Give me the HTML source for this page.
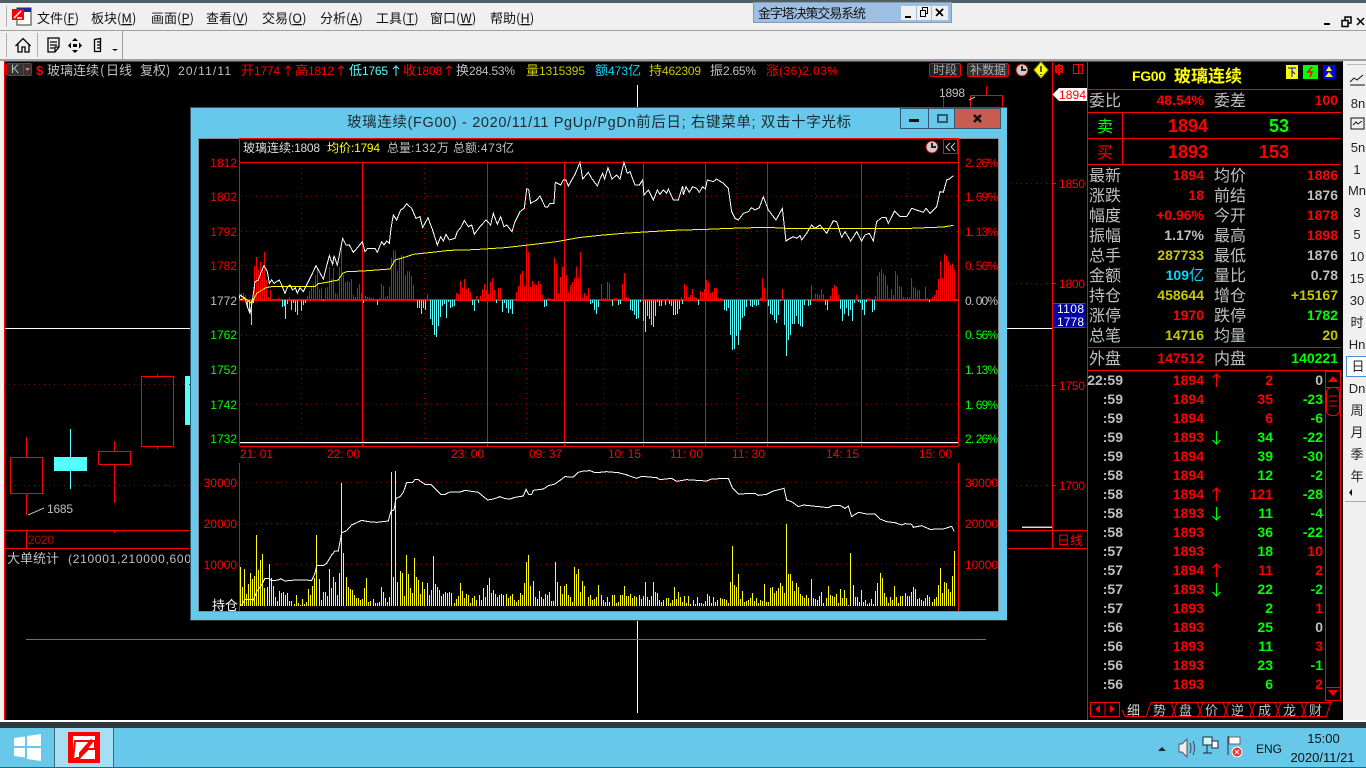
<!DOCTYPE html>
<html><head><meta charset="utf-8"><title>金字塔决策交易系统</title>
<style>
html,body{margin:0;padding:0;background:#000;overflow:hidden;width:1366px;height:768px}
svg{display:block;position:absolute;left:0;top:0}
text{white-space:pre}
.t{font:12px "Liberation Sans",sans-serif}
.c{font:13px "WenQuanYi Zen Hei","Noto Sans CJK SC",sans-serif}
.z{font:13px "WenQuanYi Zen Hei","Noto Sans CJK SC",sans-serif}
.h{font:12px "WenQuanYi Zen Hei","Noto Sans CJK SC",sans-serif}
.m{font:13px "Noto Sans CJK SC","Liberation Sans",sans-serif;fill:#111}
.l{font:16px "WenQuanYi Zen Hei","Noto Sans CJK SC",sans-serif;fill:#c0c0c0}
.b{font:bold 14px "Liberation Sans",sans-serif;text-anchor:end}
.B{font:bold 18px "Liberation Sans",sans-serif;text-anchor:end}
.r{fill:#f00}.g{fill:#0f0}.y{fill:#ff0}.w{fill:#c0c0c0}.o{fill:#c8c800}.a{fill:#54ffff}
.e{text-anchor:end}
.n{font:13px "Liberation Sans",sans-serif;fill:#222;text-anchor:middle}
.d{stroke:#8a0000;stroke-width:1;stroke-dasharray:1 4;fill:none}
.s{stroke:#f00;stroke-width:1;fill:none}
.p{fill:none;stroke-width:3;shape-rendering:crispEdges}
.v{fill:none;stroke-width:1;shape-rendering:crispEdges}
</style></head><body>
<svg width="1366" height="768" viewBox="0 0 1366 768" xmlns="http://www.w3.org/2000/svg">
<rect width="1366" height="768" fill="#f0f0f0"/>
<rect width="1366" height="3" fill="#4c6066"/>
<g shape-rendering="crispEdges">
<rect y="30" width="1366" height="1" fill="#a0a0a0"/>
<rect y="59" width="1366" height="2" fill="#a0a0a0"/>
<rect x="122" y="31" width="1" height="28" fill="#a0a0a0"/>
<rect x="6" y="6" width="1" height="21" fill="#b0b0b0"/>
<rect x="6" y="33" width="1" height="24" fill="#b0b0b0"/>
<rect x="37" y="33" width="1" height="24" fill="#b0b0b0"/>
<rect x="4" y="61" width="1339" height="659" fill="#000"/>
<rect x="4" y="61" width="1" height="659" fill="#f00"/>
<rect x="4" y="61" width="1338" height="1" fill="#f00"/>
<rect y="720" width="1366" height="2" fill="#fff"/>
<rect y="722" width="1366" height="6" fill="#2f3a3d"/>
<rect y="728" width="1366" height="40" fill="#67c8ea"/>
<rect y="767" width="1366" height="1" fill="#555"/>
<rect x="54" y="728" width="59" height="39" fill="#a6def3"/>
<path d="M54.500 728V767M113.500 728V767" stroke="#3a6a7a"/>
</g>

<!-- menu -->
<g>
<rect x="17" y="8" width="14" height="17" fill="#fff" stroke="#333"/>
<rect x="17" y="8" width="14" height="4" fill="#1a2a90"/>
<rect x="12" y="9" width="12" height="11" fill="#f00"/>
<path d="M14 18l7-7M17 18h5" stroke="#fff" stroke-width="1.500"/>
<text class="m" x="37" y="23">文件(<tspan text-decoration="underline">F</tspan>)</text>
<text class="m" x="91" y="23">板块(<tspan text-decoration="underline">M</tspan>)</text>
<text class="m" x="151" y="23">画面(<tspan text-decoration="underline">P</tspan>)</text>
<text class="m" x="206" y="23">查看(<tspan text-decoration="underline">V</tspan>)</text>
<text class="m" x="262" y="23">交易(<tspan text-decoration="underline">O</tspan>)</text>
<text class="m" x="320" y="23">分析(<tspan text-decoration="underline">A</tspan>)</text>
<text class="m" x="376" y="23">工具(<tspan text-decoration="underline">T</tspan>)</text>
<text class="m" x="430" y="23">窗口(<tspan text-decoration="underline">W</tspan>)</text>
<text class="m" x="490" y="23">帮助(<tspan text-decoration="underline">H</tspan>)</text>
<path d="M1324 24h6" stroke="#000" stroke-width="2"/>
<path d="M1342 20.500h6v6h-6zM1345 20v-3h6v6h-3" stroke="#000" stroke-width="1.500" fill="none"/>
<path d="M1357 18l7 7m0-7l-7 7" stroke="#000" stroke-width="1.500"/>
</g>

<!-- toolbar icons -->
<g fill="none" stroke="#000" stroke-width="1.300">
<path d="M15.500 46L23 38.500 30.500 46M18 44v8h4v-5h3v5h4v-8"/>
<path d="M48 38h11v9l-4 5h-7zM50 42h7M50 45h7M50 48h4M55 52v-5h4"/>
<path d="M94.500 39.500l6-1v13h-6zM97 42h3M97 45h3M97 48h3"/>
</g>
<g fill="#000">
<path d="M75 38l3 3h-6zM75 53l3-3h-6zM68 45.500l3-3v6zM82 45.500l-3-3v6z"/>
<rect x="73" y="44" width="4" height="3"/>
<path d="M112 49h6l-3 2z"/>
</g>

<!-- floating title -->
<g shape-rendering="crispEdges">
<rect x="753.500" y="2.500" width="198" height="20" fill="#9dbfe3" stroke="#8a9aa8"/>
<rect x="901" y="6" width="15" height="14" fill="#f0f0f0"/>
<rect x="917" y="6" width="14" height="14" fill="#f0f0f0"/>
<rect x="932" y="6" width="16" height="14" fill="#f0f0f0"/>
<rect x="905" y="16" width="6" height="2" fill="#000"/>
<path d="M920.500 10.500h5v6h-5zM922.500 10V7.500h5v6h-2" stroke="#000" fill="none"/>
<path d="M936 9l7 7m0-7l-7 7" stroke="#000" stroke-width="1.500" fill="none"/>
</g>
<text class="z" x="758" y="18" fill="#111" textLength="108">金字塔决策交易系统</text>

<!-- info bar -->
<rect x="6.500" y="63.500" width="25" height="12" rx="2" fill="#333" stroke="#f00"/>
<path d="M23.500 64v11" stroke="#f00"/>
<path d="M25 68h5l-2.500 3z" fill="#f66"/>
<text class="t" x="11" y="73" fill="#bbb" font-weight="bold">K</text>
<text x="36" y="75" font-family="Liberation Sans" font-size="13" font-weight="bold" fill="#f00">$</text>
<text class="z w" x="47 60 73 86 100 106 119 140 153 166" y="75">玻璃连续(日线复权)</text>
<text class="t w" x="178" y="75" textLength="53">20/11/11</text>
<g class="z r">
<text x="241" y="75">开</text><text x="295" y="75">高</text><text x="403" y="75">收</text><text x="766" y="75">涨</text>
</g>
<text class="z a" x="349" y="75">低</text>
<text class="z w" x="456" y="75">换</text>
<text class="z o" x="526" y="75">量</text>
<text class="z" fill="#00d8ff" x="595" y="75">额</text>
<text class="z" fill="#00d8ff" x="628" y="75">亿</text>
<text class="z o" x="649" y="75">持</text>
<text class="z w" x="710" y="75">振</text>
<g class="t">
<text class="r" x="254" y="75" textLength="26">1774</text>
<text class="r" x="308" y="75" textLength="26">1812</text>
<text class="a" x="362" y="75" textLength="26">1765</text>
<text class="r" x="416" y="75" textLength="26">1808</text>
<text class="w" x="469" y="75" textLength="46">284.53%</text>
<text class="o" x="539" y="75" textLength="46">1315395</text>
<text fill="#00d8ff" x="608" y="75" textLength="20">473</text>
<text class="o" x="662" y="75" textLength="39">462309</text>
<text class="w" x="723" y="75" textLength="33">2.65%</text>
<text class="r" x="779" y="75" textLength="59">(36)2.03%</text>
</g>
<g fill="none" stroke-width="1">
<path d="M288 76V66m-3 3l3-3 3 3M341 76V66m-3 3l3-3 3 3M449 76V66m-3 3l3-3 3 3" stroke="#f00"/>
<path d="M396 76V66m-3 3l3-3 3 3" stroke="#54ffff"/>
</g>
<rect x="929.500" y="63.500" width="31" height="13" rx="2" fill="#222" stroke="#f00"/>
<rect x="967.500" y="63.500" width="41" height="13" rx="2" fill="#333" stroke="#f00"/>
<text class="h" x="933" y="74" fill="#aaa">时段</text>
<text class="h" x="970" y="74" fill="#aaa">补数据</text>
<circle cx="1022" cy="70" r="6" fill="#ccc" stroke="#a00"/><path d="M1022 66v4h4" stroke="#222" stroke-width="2" fill="none"/>
<path d="M1041 62l7 8-7 8-7-8z" fill="#ff0" stroke="#a0a000"/><path d="M1041 66v6M1041 74v1" stroke="#555" stroke-width="2"/>
<path d="M1059 64v11M1055 69h8M1056 66h6v6h-6z" stroke="#e00" stroke-width="2" fill="none"/>
<rect x="1073.500" y="64.500" width="9" height="9" fill="none" stroke="#f00"/><path d="M1078.500 65v9" stroke="#f00"/>

<!-- background kline left -->
<g class="s" shape-rendering="crispEdges">
<path d="M26.500 437V457M26.500 494V515M114.500 441V451M114.500 465V503M157.500 374V376M157.500 446V449"/>
<rect x="10.500" y="457.500" width="32" height="36"/>
<rect x="98.500" y="451.500" width="32" height="13"/>
<rect x="141.500" y="376.500" width="32" height="70"/>
<path d="M4 530.500H191M4 548.500H191M26.500 530V548M114.500 531V533"/>
<path d="M1007 530.500H1088M1007 548.500H1088M1052.500 61V548M1087.500 61V720"/>
<path d="M943.500 97V108M986.500 86V95M970.500 108V95.500H1002.500V108"/>
</g>
<rect x="54" y="457" width="33" height="14" fill="#54ffff"/>
<rect x="70" y="429" width="1" height="60" fill="#54ffff"/>
<rect x="185" y="376" width="6" height="49" fill="#54ffff"/>
<path d="M4 384.500H191M4 485.500H191M1006 183.500H1052M1006 283.500H1052M1006 385.500H1052M1006 485.500H1052" class="d"/>
<path d="M28 515l16-7M969 100l6-3" stroke="#bbb" fill="none"/>
<text class="t w" x="47" y="513" textLength="26">1685</text>
<text class="t" x="28" y="544" fill="#c00000" textLength="26">2020</text>
<text class="z w" x="7" y="563">大单统计</text>
<text class="t w" x="68" y="563" textLength="123">(210001,210000,600</text>
<rect x="5" y="328" width="186" height="1" fill="#fff"/>
<rect x="1007" y="328" width="45" height="1" fill="#fff"/>
<rect x="637" y="85" width="1" height="23" fill="#fff"/>
<rect x="637" y="620" width="1" height="93" fill="#fff"/>
<rect x="26" y="639" width="960" height="1" fill="#808000"/>
<rect x="190" y="620" width="817" height="1" fill="#333"/>
<path d="M1022 527.500H1052" stroke="#ddd"/><path d="M1022 526.500H1052" stroke="#666"/>
<text class="t w" x="939" y="97" textLength="26">1898</text>

<!-- mid axis -->
<g fill="#f00">
<path d="M1052 183.500h4M1052 283.500h4M1052 385.500h4M1052 485.500h4" stroke="#f00"/>
<text class="t" x="1059" y="188" textLength="26">1850</text>
<text class="t" x="1059" y="288" textLength="26">1800</text>
<text class="t" x="1059" y="390" textLength="26">1750</text>
<text class="t" x="1059" y="490" textLength="26">1700</text>
</g>
<path d="M1052.500 94.500L1059 88H1087V101H1059z" fill="#fff"/>
<text class="t r" x="1059" y="99" textLength="27">1894</text>
<rect x="1053" y="303" width="32" height="25" fill="#0000a0"/>
<path d="M1053 303.500h32M1053 327.500h32" stroke="#f00"/>
<text class="t" x="1057" y="313" fill="#fff" textLength="27">1108</text>
<text class="t" x="1057" y="326" fill="#fff" textLength="27">1778</text>

<!-- window -->
<rect x="191" y="108" width="816" height="512" fill="#66c9ec"/>
<path d="M190.500 620.500V107.500H1007" stroke="#37576a" fill="none"/>
<rect x="198.500" y="138.500" width="800" height="473" fill="#000" stroke="#8a8a8a"/>
<text x="347" y="127" font-family="Liberation Sans,Noto Sans CJK SC,sans-serif" font-size="14.500" fill="#1a2a30" textLength="504">玻璃连续(FG00) - 2020/11/11 PgUp/PgDn前后日; 右键菜单; 双击十字光标</text>
<g shape-rendering="crispEdges">
<rect x="900.500" y="108.500" width="28" height="20" fill="#66c9ec" stroke="#37576a"/>
<rect x="928.500" y="108.500" width="26" height="20" fill="#66c9ec" stroke="#37576a"/>
<rect x="954.500" y="108.500" width="46" height="20" fill="#c75c50" stroke="#37576a"/>
<rect x="909" y="119" width="10" height="3" fill="#111"/>
<rect x="938" y="115" width="9" height="7" fill="none" stroke="#37576a" stroke-width="2"/>
</g>
<path d="M974 115l7 7m0-7l-7 7" stroke="#111" stroke-width="2.500" fill="none"/>

<!-- chart grid -->
<g>
<path class="d" d="M241 196.500H958M241 231.500H958M241 265.500H958M241 335.500H958M241 369.500H958M241 404.500H958M241 438.500H958M301.500 163V442M424.500 163V442M526.500 163V442M603.500 163V442M675.500 163V442M736.500 163V442M815.500 163V442M907.500 163V442M241 482.500H958M241 523.500H958M241 564.500H958"/>
<path d="M362.500 162V446M564.500 162V446" stroke="#f00" shape-rendering="crispEdges"/>
<path d="M487.500 162V446M643.500 162V446M705.500 162V446M767.500 162V446M861.500 162V446" stroke="#f00" shape-rendering="crispEdges"/>
<path d="M240 138.500H958M240 162.500H958M240 446.500H958" stroke="#f00" shape-rendering="crispEdges"/>
<path d="M240 442.500H958" stroke="#fff" shape-rendering="crispEdges"/><path d="M240 443.500H958" stroke="#223a90" shape-rendering="crispEdges"/>
<path d="M239.500 138V446M958.500 138V446M239.500 463V611M958.500 463V611" stroke="#f00" shape-rendering="crispEdges"/>
<path d="M240 300H958" stroke="#f00" stroke-width="2" shape-rendering="crispEdges"/>
<rect x="943.500" y="139.500" width="14" height="14" fill="none" stroke="#f00"/>
<path d="M950 143l-4 4 4 4M955 143l-4 4 4 4" stroke="#ccc" fill="none"/>
<circle cx="932" cy="147" r="6" fill="#ccc" stroke="#a00"/><path d="M932 143v4h4" stroke="#222" stroke-width="2" fill="none"/>
</g>

<!-- header -->
<text class="h" fill="#ddd" x="243" y="152">玻璃连续</text>
<text class="t" fill="#ddd" x="291" y="152" textLength="29">:1808</text>
<text class="h y" x="327" y="152">均价</text>
<text class="t y" x="351" y="152" textLength="29">:1794</text>
<text class="h w" x="387" y="152">总量</text>
<text class="t w" x="411" y="152" textLength="25">:132</text>
<text class="h w" x="437" y="152">万</text>
<text class="h w" x="453" y="152">总额</text>
<text class="t w" x="477" y="152" textLength="25">:473</text>
<text class="h w" x="502" y="152">亿</text>

<!-- axis labels -->
<g class="t e">
<text class="r" x="237" y="167">1812</text><text class="r" x="237" y="201">1802</text><text class="r" x="237" y="236">1792</text><text class="r" x="237" y="270">1782</text>
<text class="w" x="237" y="305">1772</text>
<text class="g" x="237" y="339">1762</text><text class="g" x="237" y="374">1752</text><text class="g" x="237" y="409">1742</text><text class="g" x="237" y="443">1732</text>
<text class="r" x="237" y="487">30000</text><text class="r" x="237" y="528">20000</text><text class="r" x="237" y="569">10000</text>
</g>
<g class="t">
<text class="r" x="965" y="167" textLength="33">2. 26%</text><text class="r" x="965" y="201" textLength="33">1. 69%</text><text class="r" x="965" y="236" textLength="33">1. 13%</text><text class="r" x="965" y="270" textLength="33">0. 56%</text>
<text class="w" x="965" y="305" textLength="33">0. 00%</text>
<text class="g" x="965" y="339" textLength="33">0. 56%</text><text class="g" x="965" y="374" textLength="33">1. 13%</text><text class="g" x="965" y="409" textLength="33">1. 69%</text><text class="g" x="965" y="443" textLength="33">2. 26%</text>
<text class="r" x="965" y="487" textLength="33">30000</text><text class="r" x="965" y="528" textLength="33">20000</text><text class="r" x="965" y="569" textLength="33">10000</text>
<text class="r" x="240" y="458" textLength="33">21: 01</text><text class="r" x="327" y="458" textLength="33">22: 00</text><text class="r" x="451" y="458" textLength="33">23: 00</text><text class="r" x="529" y="458" textLength="33">09: 37</text><text class="r" x="608" y="458" textLength="33">10: 15</text><text class="r" x="670" y="458" textLength="33">11: 00</text><text class="r" x="732" y="458" textLength="33">11: 30</text><text class="r" x="826" y="458" textLength="33">14: 15</text><text class="r" x="919" y="458" textLength="33">15: 00</text>
</g>
<text class="z" fill="#fff" x="212" y="610">持仓</text>

<!-- price bars left half -->
<g transform="translate(190.500,300)" class="v">
<path stroke="#f00" d="M51 0V-7M53 0V-7M55 0V-5M64 0V-34M66 0V-43M68 0V-30M70 0V-38M72 0V-33M74 0V-48M76 0V-20M78 0V-3M80 0V-10M82 0V-1M84 0V-1M86 0V-1M88 0V-2M99 0V-3M117 0V-4M119 0V-9M121 0V-14M123 0V-16M125 0V-25M127 0V-32M129 0V-11M131 0V-12M135 0V-12M137 0V-13M139 0V-33M141 0V-21M143 0V-32M145 0V-7M147 0V-6M149 0V-33M151 0V-55M153 0V-25M155 0V-18M157 0V-19M159 0V-18M161 0V-21M163 0V-5M165 0V-3M167 0V-12M169 0V-16M171 0V-7M175 0V-4M177 0V-3M179 0V-3M181 0V-2M183 0V-2M185 0V-1M189 0V-2M191 0V-16M193 0V-14M195 0V-3M197 0V-4M199 0V-13M201 0V-42M203 0V-50M205 0V-49M207 0V-29M209 0V-42M211 0V-45M213 0V-44M215 0V-25M217 0V-29M219 0V-29M221 0V-24M223 0V-15M237 0V-6M266 0V-7M268 0V-6M270 0V-19M272 0V-12M274 0V-21M276 0V-11M278 0V-12M280 0V-8M286 0V-4M290 0V-4M292 0V-11M294 0V-16M296 0V-10M298 0V-6M300 0V-18M302 0V-22M304 0V-10M308 0V-12M310 0V-12M324 0V-1M326 0V-8M328 0V-14M330 0V-26M332 0V-29M334 0V-14M336 0V-55M338 0V-48M340 0V-13M342 0V-19M344 0V-16M346 0V-15M348 0V-19M350 0V-16M352 0V-5M358 0V-2M360 0V-1M362 0V-1M364 0V-42M366 0V-36M368 0V-7M370 0V-23M372 0V-33M374 0V-24M376 0V-25M378 0V-8M380 0V-15M382 0V-18M384 0V-22M386 0V-33M388 0V-22M390 0V-48M392 0V-2M394 0V-7M396 0V-4M398 0V-12"/>
<path stroke="#54ffff" d="M57 0V8M59 0V13M61 0V25M63 0V3M92 0V7M94 0V6M95 0V19M97 0V4M101 0V10M103 0V3M105 0V12M107 0V15M111 0V11M113 0V5M115 0V3M133 0V1M173 0V3M187 0V5M227 0V8M229 0V8M231 0V14M233 0V8M235 0V10M240 0V19M242 0V25M244 0V35M246 0V37M248 0V26M250 0V17M252 0V6M254 0V4M256 0V18M258 0V2M260 0V8M262 0V7M264 0V6M282 0V5M284 0V11M288 0V3M306 0V3M312 0V12M314 0V3M316 0V8M318 0V13M320 0V9M322 0V14M354 0V7M356 0V6M400 0V4M402 0V3M404 0V10M406 0V14M408 0V7"/>
</g>
<!-- price bars right half -->
<g transform="translate(600.500,300)" class="v">
<path stroke="#f00" d="M1 0V-16M3 0V-2M5 0V-2M7 0V-18M9 0V-17M14 0V-2M16 0V-2M22 0V-16M24 0V-27M26 0V-3M28 0V-2M63 0V-1M67 0V-2M81 0V-3M84 0V-16M86 0V-14M88 0V-3M90 0V-5M92 0V-11M94 0V-3M96 0V-2M100 0V-9M102 0V-8M104 0V-11M106 0V-20M108 0V-18M110 0V-7M112 0V-8M114 0V-12M116 0V-12M118 0V-2M120 0V-2M122 0V-1M148 0V-1M160 0V-2M162 0V-22M164 0V-12M182 0V-11M211 0V-15M213 0V-1M215 0V-6M217 0V-6M219 0V-5M221 0V-11M223 0V-6M230 0V-4M232 0V-12M234 0V-15M236 0V-13M238 0V-5M256 0V-5M268 0V-2M270 0V-1M275 0V-4M277 0V-24M279 0V-28M281 0V-31M283 0V-26M285 0V-24M287 0V-15M289 0V-2M291 0V-11M293 0V-5M295 0V-29M297 0V-25M299 0V-14M301 0V-13M303 0V-3M305 0V-2M307 0V-3M309 0V-3M311 0V-22M313 0V-13M315 0V-12M317 0V-10M319 0V-10M321 0V-1M323 0V-1M325 0V-13M327 0V-2M332 0V-3M334 0V-5M336 0V-10M338 0V-21M340 0V-39M342 0V-22M344 0V-46M346 0V-44M348 0V-39M350 0V-35M352 0V-36M354 0V-30"/>
<path stroke="#54ffff" d="M12 0V6M18 0V5M20 0V4M30 0V10M32 0V11M34 0V15M36 0V19M38 0V18M40 0V2M43 0V21M45 0V32M47 0V16M49 0V19M51 0V25M53 0V27M55 0V16M57 0V2M59 0V6M61 0V6M65 0V5M69 0V4M71 0V6M73 0V15M75 0V15M77 0V14M79 0V9M82 0V4M98 0V5M124 0V10M126 0V11M128 0V8M130 0V35M132 0V50M134 0V49M136 0V36M138 0V45M140 0V30M142 0V18M144 0V16M146 0V7M150 0V6M152 0V7M154 0V5M156 0V6M158 0V5M168 0V6M170 0V14M172 0V15M174 0V20M176 0V23M178 0V15M180 0V1M184 0V25M186 0V56M188 0V40M190 0V35M192 0V24M194 0V24M196 0V16M198 0V24M200 0V26M202 0V27M204 0V5M208 0V6M210 0V5M225 0V5M227 0V10M240 0V9M242 0V21M244 0V14M246 0V8M248 0V16M250 0V10M252 0V21M254 0V3M258 0V2M260 0V3M262 0V10M264 0V15M266 0V2M272 0V12M274 0V10M329 0V2"/>
</g>

<!-- price lines -->
<g transform="translate(190,105) scale(.33333)">
<polyline class="p" stroke="#fff" points="148,580 150,570 165,580 172,605 180,625 187,590 195,530 205,525 212,505 222,482 232,500 238,535 245,525 252,535 268,525 275,540 285,565 293,545 300,540 308,555 316,548 322,565 330,548 340,560 350,540 365,510 378,482 388,500 400,522 418,452 428,478 432,452 442,480 450,440 458,400 468,420 478,420 490,442 505,425 517,410 525,440 533,430 555,430 562,442 575,410 582,420 590,408 598,415 603,370 610,330 620,345 632,315 640,310 650,296 665,310 678,340 690,335 698,368 714,338 726,370 742,420 752,395 760,408 768,388 778,405 795,400 802,380 812,368 823,347 835,365 845,360 853,388 870,365 888,345 902,360 910,325 922,358 932,335 942,365 950,360 966,380 975,350 990,320 1003,310 1010,252 1016,253 1022,295 1040,285 1050,273 1065,305 1072,307 1080,295 1092,295 1096,232 1112,240 1120,225 1128,225 1135,243 1155,208 1170,172 1178,222 1195,202 1205,220 1222,243 1230,222"/>
<polyline class="p" stroke="#ff0" points="148,585 165,580 185,595 200,565 228,548 250,544 375,544 385,536 410,532 445,525 458,505 470,500 520,498 600,492 615,465 650,455 670,448 780,436 850,434 945,428 1015,420 1100,410 1165,398 1230,391"/>
</g>
<g transform="translate(600,105) scale(.33333)">
<polyline class="p" stroke="#fff" points="0,222 8,205 14,222 24,188 36,222 50,210 60,222 72,172 82,205 90,200 105,240 118,240 128,225 132,270 145,255 160,285 172,255 180,268 190,255 200,265 205,252 220,285 235,285 248,243 250,270 258,245 268,262 278,245 290,250 298,262 308,245 316,252 322,225 340,230 350,222 370,235 385,250 395,320 405,340 415,345 430,325 445,320 455,308 465,315 478,308 490,275 505,315 528,345 547,310 558,408 570,400 580,395 590,400 600,392 605,405 620,385 635,360 645,370 660,360 680,385 700,347 710,350 725,397 735,380 752,408 770,380 785,408 795,390 808,385 820,408 830,350 845,338 858,338 865,355 884,318 900,335 920,335 935,310 970,322 978,310 990,325 1010,305 1020,260 1030,262 1040,225 1048,222 1060,212"/>
<polyline class="p" stroke="#ff0" points="0,391 70,385 150,380 220,376 320,373 390,370 500,367 580,371 930,370 1030,366 1060,361"/>
</g>

<!-- volume bars -->
<g transform="translate(190.500,606)" class="v" stroke="#ff0">
<path d="M50 0V-39M52 0V-19M54 0V-37M56 0V-12M58 0V-22M60 0V-33M62 0V-27M64 0V-30M66 0V-71M68 0V-36M70 0V-46M72 0V-52M74 0V-18M77 0V-19M79 0V-42M81 0V-28M83 0V-20M85 0V-9M87 0V-5M89 0V-15M91 0V-13M93 0V-14M95 0V-11M97 0V-13M99 0V-5M101 0V-5M104 0V-2M106 0V-11M108 0V-3M110 0V-1M112 0V-7M114 0V-2M116 0V-4M118 0V-17M120 0V-11M122 0V-20M124 0V-28M126 0V-71M129 0V-27M131 0V-6M133 0V-14M135 0V-14M137 0V-10M139 0V-37M141 0V-18M143 0V-29M145 0V-24M147 0V-11M149 0V-33M151 0V-123M153 0V-53M156 0V-29M158 0V-19M160 0V-17M162 0V-16M164 0V-11M166 0V-8M168 0V-8M170 0V-6M172 0V-7M174 0V-18M176 0V-28M178 0V-4M180 0V-5M183 0V-7M185 0V-3M187 0V-3M189 0V-4M191 0V-19M193 0V-14M195 0V-8M197 0V-4M199 0V-9M201 0V-134M203 0V-29M205 0V-135M207 0V-24M210 0V-35M212 0V-33M214 0V-10M216 0V-51M218 0V-32M220 0V-18M222 0V-13M224 0V-48M226 0V-29M228 0V-26M230 0V-12M232 0V-24M234 0V-17M237 0V-23M239 0V-11M241 0V-16M243 0V-50M245 0V-22M247 0V-19M249 0V-16M251 0V-10M253 0V-12M255 0V-14M257 0V-13M259 0V-14M261 0V-13M264 0V-3M266 0V-7M268 0V-10M270 0V-23M272 0V-15M274 0V-8M276 0V-12M278 0V-11M280 0V-3M282 0V-8M284 0V-10M286 0V-6M289 0V-11M291 0V-6M293 0V-18M295 0V-9M297 0V-21M299 0V-28M301 0V-13M303 0V-16M305 0V-12M307 0V-9M309 0V-11M311 0V-12M313 0V-11M316 0V-12M318 0V-8M320 0V-10M322 0V-12M324 0V-6M326 0V-4M328 0V-6M330 0V-13M332 0V-11M334 0V-23M336 0V-44M338 0V-51M340 0V-20M343 0V-25M345 0V-9M347 0V-7M349 0V-15M351 0V-9M353 0V-7M355 0V-12M357 0V-11M359 0V-14M361 0V-5M363 0V-5M365 0V-44M367 0V-24M370 0V-20M372 0V-12M374 0V-20M376 0V-22M378 0V-11M380 0V-9M382 0V-4M384 0V-39M386 0V-32M388 0V-37M390 0V-14M392 0V-25M394 0V-20M398 0V-9M400 0V-11M402 0V-6M404 0V-7M406 0V-9M408 0V-21"/>
</g>
<g transform="translate(600.500,606)" class="v" stroke="#ff0">
<path d="M1 0V-11M3 0V-6M5 0V-4M7 0V-9M9 0V-4M12 0V-11M14 0V-11M16 0V-3M18 0V-4M20 0V-11M22 0V-11M24 0V-20M26 0V-10M28 0V-10M30 0V-12M32 0V-8M34 0V-10M36 0V-9M39 0V-11M41 0V-7M43 0V-10M45 0V-24M47 0V-9M49 0V-6M51 0V-10M53 0V-24M55 0V-14M57 0V-13M59 0V-6M61 0V-4M63 0V-6M66 0V-8M68 0V-8M70 0V-3M72 0V-6M74 0V-19M76 0V-7M78 0V-14M80 0V-9M82 0V-4M84 0V-10M86 0V-3M88 0V-10M90 0V-2M93 0V-6M95 0V-2M97 0V-9M99 0V-3M101 0V-3M103 0V-2M105 0V-5M107 0V-12M109 0V-10M111 0V-3M113 0V-9M115 0V-4M117 0V-6M120 0V-8M122 0V-7M124 0V-7M126 0V-6M128 0V-3M130 0V-24M132 0V-60M134 0V-21M136 0V-19M138 0V-32M140 0V-7M142 0V-15M144 0V-4M146 0V-5M148 0V-6M150 0V-8M152 0V-13M154 0V-5M156 0V-8M158 0V-3M160 0V-6M162 0V-5M164 0V-22M166 0V-4M168 0V-4M170 0V-18M172 0V-19M174 0V-13M176 0V-15M178 0V-18M180 0V-23M182 0V-20M184 0V-13M186 0V-82M188 0V-32M190 0V-32M192 0V-25M194 0V-15M196 0V-23M198 0V-19M200 0V-12M202 0V-10M204 0V-8M206 0V-11M208 0V-8M211 0V-27M213 0V-8M215 0V-7M217 0V-6M219 0V-10M221 0V-14M223 0V-3M226 0V-8M228 0V-20M230 0V-11M232 0V-10M234 0V-9M236 0V-12M238 0V-3M240 0V-17M242 0V-8M244 0V-16M246 0V-8M248 0V-1M250 0V-53M253 0V-21M255 0V-9M257 0V-9M259 0V-4M261 0V-16M263 0V-4M265 0V-6M267 0V-2M269 0V-3M271 0V-7M273 0V-2M275 0V-15M277 0V-23M280 0V-33M282 0V-28M284 0V-13M286 0V-9M288 0V-3M290 0V-9M292 0V-6M294 0V-20M296 0V-9M298 0V-3M300 0V-10M302 0V-10M305 0V-13M307 0V-10M309 0V-10M311 0V-14M313 0V-19M315 0V-17M317 0V-7M319 0V-8M321 0V-6M323 0V-5M325 0V-8M327 0V-11M329 0V-9M332 0V-4M334 0V-7M336 0V-9M338 0V-21M340 0V-38M342 0V-13M344 0V-24M346 0V-23M348 0V-17M350 0V-14M352 0V-30M354 0V-55"/>
</g>
<g transform="translate(190,365) scale(.33333)">
<polyline class="p" stroke="#fff" points="150,722 155,720 165,703 180,703 190,705 200,680 215,660 225,640 235,640 245,647 265,645 272,641 285,648 315,645 350,645 365,647 375,625 380,602 400,602 410,595 425,570 435,558 445,558 452,520 455,503 470,497 485,480 500,473 515,466 535,470 560,472 595,468 603,438 612,435 618,400 630,395 640,382 650,353 668,352 675,344 685,344 705,358 722,358 735,370 752,388 765,388 780,381 810,381 825,376 845,379 865,382 878,393 893,405 910,402 930,395 945,401 960,402 975,397 1000,393 1008,373 1016,388 1025,388 1030,376 1060,372 1075,362 1095,357 1125,335 1150,336 1165,322 1180,318 1200,317 1215,323 1230,323"/>
</g>
<g transform="translate(600,365) scale(.33333)">
<polyline class="p" stroke="#fff" points="0,322 20,320 55,323 75,328 110,340 125,334 170,338 180,344 215,340 230,349 260,344 320,348 335,342 385,340 397,368 415,387 465,385 475,391 500,388 520,378 545,372 552,370 560,405 575,410 595,425 610,420 685,428 700,421 720,421 735,430 745,423 755,455 775,442 800,447 825,447 840,462 860,470 885,473 905,480 915,476 935,478 940,487 965,482 990,493 1030,492 1055,484 1063,500"/>
</g>

<!-- right panel -->
<g shape-rendering="crispEdges" stroke="#f00">
<path d="M1088 89.500H1341M1088 112.500H1341M1088 138.500H1341M1088 164.500H1341M1088 347.500H1341M1088 370.500H1341M1122.500 112V164"/>
<path d="M1325.500 371V701M1340.500 371V701M1325 371.500H1341M1325 387.500H1341M1325 687.500H1341M1325 700.500H1341" fill="none"/>
</g>
<text x="1132" y="81" font-family="Liberation Sans" font-weight="bold" font-size="14" fill="#ff0" textLength="34">FG00</text>
<text x="1174" y="82" font-family="Noto Sans CJK SC,sans-serif" font-weight="bold" font-size="17" fill="#ff0">玻璃连续</text>
<rect x="1286" y="65" width="12" height="14" fill="#ff0"/><path d="M1288 68h8M1292 68v9M1292 71l3 3" stroke="#00f" fill="none"/>
<rect x="1303" y="65" width="15" height="14" fill="#0f0"/><path d="M1312 67l-4 5h4l-2 5" stroke="#f00" stroke-width="1.500" fill="none"/>
<rect x="1323" y="65" width="12" height="14" fill="#00f"/><path d="M1329 66l3 5h-6zM1329 72l4 5h-8z" fill="#ff0"/>

<text class="l" x="1089" y="106">委比</text><text class="l" x="1214" y="106">委差</text>
<text class="b r" x="1204" y="105">48.54%</text><text class="b r" x="1338" y="105">100</text>
<text class="l g" x="1097" y="132" style="fill:#0f0">卖</text><text class="l" x="1097" y="158" style="fill:#f00">买</text>
<text class="B r" x="1208" y="132">1894</text><text class="B g" x="1289" y="132">53</text>
<text class="B r" x="1208" y="158">1893</text><text class="B r" x="1289" y="158">153</text>

<g class="l">
<text x="1089" y="181">最新</text><text x="1214" y="181">均价</text>
<text x="1089" y="201">涨跌</text><text x="1214" y="201">前结</text>
<text x="1089" y="221">幅度</text><text x="1214" y="221">今开</text>
<text x="1089" y="241">振幅</text><text x="1214" y="241">最高</text>
<text x="1089" y="261">总手</text><text x="1214" y="261">最低</text>
<text x="1089" y="281">金额</text><text x="1214" y="281">量比</text>
<text x="1089" y="301">持仓</text><text x="1214" y="301">增仓</text>
<text x="1089" y="321">涨停</text><text x="1214" y="321">跌停</text>
<text x="1089" y="341">总笔</text><text x="1214" y="341">均量</text>
<text x="1089" y="364">外盘</text><text x="1214" y="364">内盘</text>
</g>
<g class="b">
<text class="r" x="1204" y="180">1894</text><text class="r" x="1338" y="180">1886</text>
<text class="r" x="1204" y="200">18</text><text class="w" x="1338" y="200">1876</text>
<text class="r" x="1204" y="220">+0.96%</text><text class="r" x="1338" y="220">1878</text>
<text class="w" x="1204" y="240">1.17%</text><text class="r" x="1338" y="240">1898</text>
<text class="o" x="1204" y="260">287733</text><text class="w" x="1338" y="260">1876</text>
<text fill="#00d8ff" x="1204" y="280"><tspan>109</tspan><tspan font-weight="normal" font-size="15" font-family="WenQuanYi Zen Hei,Noto Sans CJK SC">亿</tspan></text><text class="w" x="1338" y="280">0.78</text>
<text class="o" x="1204" y="300">458644</text><text class="o" x="1338" y="300">+15167</text>
<text class="r" x="1204" y="320">1970</text><text class="g" x="1338" y="320">1782</text>
<text class="o" x="1204" y="340">14716</text><text class="o" x="1338" y="340">20</text>
<text class="r" x="1204" y="363">147512</text><text class="g" x="1338" y="363">140221</text>
</g>

<!-- ticks -->
<g class="b">
<text class="w" x="1123" y="385">22:59</text><text class="r" x="1204" y="385">1894</text><text class="r" x="1273" y="385">2</text><text class="w" x="1323" y="385">0</text>
<text class="w" x="1123" y="404">:59</text><text class="r" x="1204" y="404">1894</text><text class="r" x="1273" y="404">35</text><text class="g" x="1323" y="404">-23</text>
<text class="w" x="1123" y="423">:59</text><text class="r" x="1204" y="423">1894</text><text class="r" x="1273" y="423">6</text><text class="g" x="1323" y="423">-6</text>
<text class="w" x="1123" y="442">:59</text><text class="r" x="1204" y="442">1893</text><text class="g" x="1273" y="442">34</text><text class="g" x="1323" y="442">-22</text>
<text class="w" x="1123" y="461">:59</text><text class="r" x="1204" y="461">1894</text><text class="g" x="1273" y="461">39</text><text class="g" x="1323" y="461">-30</text>
<text class="w" x="1123" y="480">:58</text><text class="r" x="1204" y="480">1894</text><text class="g" x="1273" y="480">12</text><text class="g" x="1323" y="480">-2</text>
<text class="w" x="1123" y="499">:58</text><text class="r" x="1204" y="499">1894</text><text class="r" x="1273" y="499">121</text><text class="g" x="1323" y="499">-28</text>
<text class="w" x="1123" y="518">:58</text><text class="r" x="1204" y="518">1893</text><text class="g" x="1273" y="518">11</text><text class="g" x="1323" y="518">-4</text>
<text class="w" x="1123" y="537">:58</text><text class="r" x="1204" y="537">1893</text><text class="g" x="1273" y="537">36</text><text class="g" x="1323" y="537">-22</text>
<text class="w" x="1123" y="556">:57</text><text class="r" x="1204" y="556">1893</text><text class="g" x="1273" y="556">18</text><text class="r" x="1323" y="556">10</text>
<text class="w" x="1123" y="575">:57</text><text class="r" x="1204" y="575">1894</text><text class="r" x="1273" y="575">11</text><text class="r" x="1323" y="575">2</text>
<text class="w" x="1123" y="594">:57</text><text class="r" x="1204" y="594">1893</text><text class="g" x="1273" y="594">22</text><text class="g" x="1323" y="594">-2</text>
<text class="w" x="1123" y="613">:57</text><text class="r" x="1204" y="613">1893</text><text class="g" x="1273" y="613">2</text><text class="r" x="1323" y="613">1</text>
<text class="w" x="1123" y="632">:56</text><text class="r" x="1204" y="632">1893</text><text class="g" x="1273" y="632">25</text><text class="w" x="1323" y="632">0</text>
<text class="w" x="1123" y="651">:56</text><text class="r" x="1204" y="651">1893</text><text class="g" x="1273" y="651">11</text><text class="r" x="1323" y="651">3</text>
<text class="w" x="1123" y="670">:56</text><text class="r" x="1204" y="670">1893</text><text class="g" x="1273" y="670">23</text><text class="g" x="1323" y="670">-1</text>
<text class="w" x="1123" y="689">:56</text><text class="r" x="1204" y="689">1893</text><text class="g" x="1273" y="689">6</text><text class="r" x="1323" y="689">2</text>
</g>
<g fill="none" stroke-width="1.200">
<path stroke="#f00" d="M1216.500 374V387m-4-9l4-4 4 4M1216.500 488V501m-4-9l4-4 4 4M1216.500 564V577m-4-9l4-4 4 4"/>
<path stroke="#0f0" d="M1216.500 431V444m-4-4l4 4 4-4M1216.500 507V520m-4-4l4 4 4-4M1216.500 583V596m-4-4l4 4 4-4"/>
</g>
<!-- scrollbar -->
<path d="M1333 376l5 6h-10z" fill="#f00"/><path d="M1333 696l5-6h-10z" fill="#f00"/>
<rect x="1326.500" y="387.500" width="13" height="28" rx="5" fill="#000" stroke="#f00"/>
<path d="M1329 396h8M1329 401h8M1329 406h8" stroke="#f00"/>
<!-- tabs -->
<rect x="1090.500" y="702.500" width="29" height="14" fill="none" stroke="#f00"/><path d="M1105 702v15" stroke="#f00"/>
<path d="M1100 705v8l-5-4zM1110 705v8l5-4z" fill="#f00"/>
<path fill="none" stroke="#f00" d="M1122 710l3 6.500H1146l5-14H1331l-5 14H1150M1146 716.500M1171 702.500l5 14M1172 716.500l5-14M1197 702.500l5 14M1198 716.500l5-14M1223 702.500l5 14M1224 716.500l5-14M1249 702.500l5 14M1250 716.500l5-14M1275 702.500l5 14M1276 716.500l5-14M1301 702.500l5 14M1302 716.500l5-14"/>
<g class="z w"><text x="1127" y="715" fill="#ddd">细</text><text x="1153" y="715">势</text><text x="1179" y="715">盘</text><text x="1205" y="715">价</text><text x="1231" y="715">逆</text><text x="1258" y="715">成</text><text x="1283" y="715">龙</text><text x="1309" y="715">财</text></g>
<!-- 日线 -->
<text class="z r" x="1057" y="545">日线</text>

<!-- right toolbar -->
<rect x="1347" y="64" width="19" height="1" fill="#bbb"/>
<path d="M1350 82l4-4 3 2 6-5M1350 85h15" stroke="#111" fill="none"/>
<rect x="1351" y="118" width="13" height="11" fill="none" stroke="#111"/><path d="M1353 125l3-3 2 2 4-3" stroke="#111" fill="none"/>
<rect x="1346.500" y="356.500" width="24" height="20" fill="#fff" stroke="#4a90d9"/>
<g class="n">
<text x="1358" y="108">8n</text><text x="1358" y="152">5n</text><text x="1357" y="174">1</text><text x="1357" y="195">Mn</text>
<text x="1357" y="217">3</text><text x="1357" y="239">5</text><text x="1357" y="261">10</text><text x="1357" y="283">15</text><text x="1357" y="305">30</text>
<text x="1357" y="349">Hn</text><text x="1357" y="393">Dn</text>
<text x="1357" y="327" style="font-family:'Noto Sans CJK SC'">时</text><text x="1358" y="371" style="font-family:'Noto Sans CJK SC'">日</text><text x="1357" y="415" style="font-family:'Noto Sans CJK SC'">周</text><text x="1357" y="437" style="font-family:'Noto Sans CJK SC'">月</text><text x="1357" y="459" style="font-family:'Noto Sans CJK SC'">季</text><text x="1357" y="481" style="font-family:'Noto Sans CJK SC'">年</text>
</g>
<path d="M1352 489v7l-3-3.500z" fill="#111"/>
<rect x="1345" y="501" width="21" height="1" fill="#aaa"/>

<!-- taskbar -->
<path d="M14 738l11-1.500v9.500H14zM27 736l14-2v12H27zM14 748h11v9.500L14 756zM27 748h14v13l-14-2z" fill="#fff"/>
<rect x="68" y="732" width="32" height="31" fill="#f00"/>
<rect x="73" y="736" width="22" height="23" fill="#fff"/>
<path d="M75 741h20v8H88l-10 10h-5z" fill="none" stroke="#f00" stroke-width="2"/>
<path d="M76 756l15-17 3 2-14 18h-4z" fill="#f00"/>
<rect x="75" y="753" width="4" height="4" fill="#fff"/>
<path d="M1158 751l4-4 4 4z" fill="#222"/>
<path d="M1179 744h3l5-5v18l-5-5h-3z" fill="#eee" stroke="#555"/><path d="M1190 743q2 5 0 10M1193 741q3 7 0 14" stroke="#445" fill="none"/>
<path d="M1203 737h9v8h-9zM1207 745v8M1203 753h9" stroke="#224" fill="#cfe" /><rect x="1212" y="741" width="6" height="7" fill="#fff" stroke="#224"/>
<path d="M1228 736v19" stroke="#333"/><path d="M1229 737h11v7h-11z" fill="#fff" stroke="#666"/>
<circle cx="1237" cy="752" r="5" fill="#e33" stroke="#fff"/><path d="M1235 750l4 4m0-4l-4 4" stroke="#fff"/>
<text x="1256" y="753" font-family="Liberation Sans" font-size="12" fill="#111">ENG</text>
<text x="1323.500" y="743" font-family="Liberation Sans" font-size="13" fill="#111" text-anchor="middle">15:00</text>
<text x="1322.500" y="762" font-family="Liberation Sans" font-size="13" fill="#111" text-anchor="middle">2020/11/21</text>
</svg>
</body></html>
